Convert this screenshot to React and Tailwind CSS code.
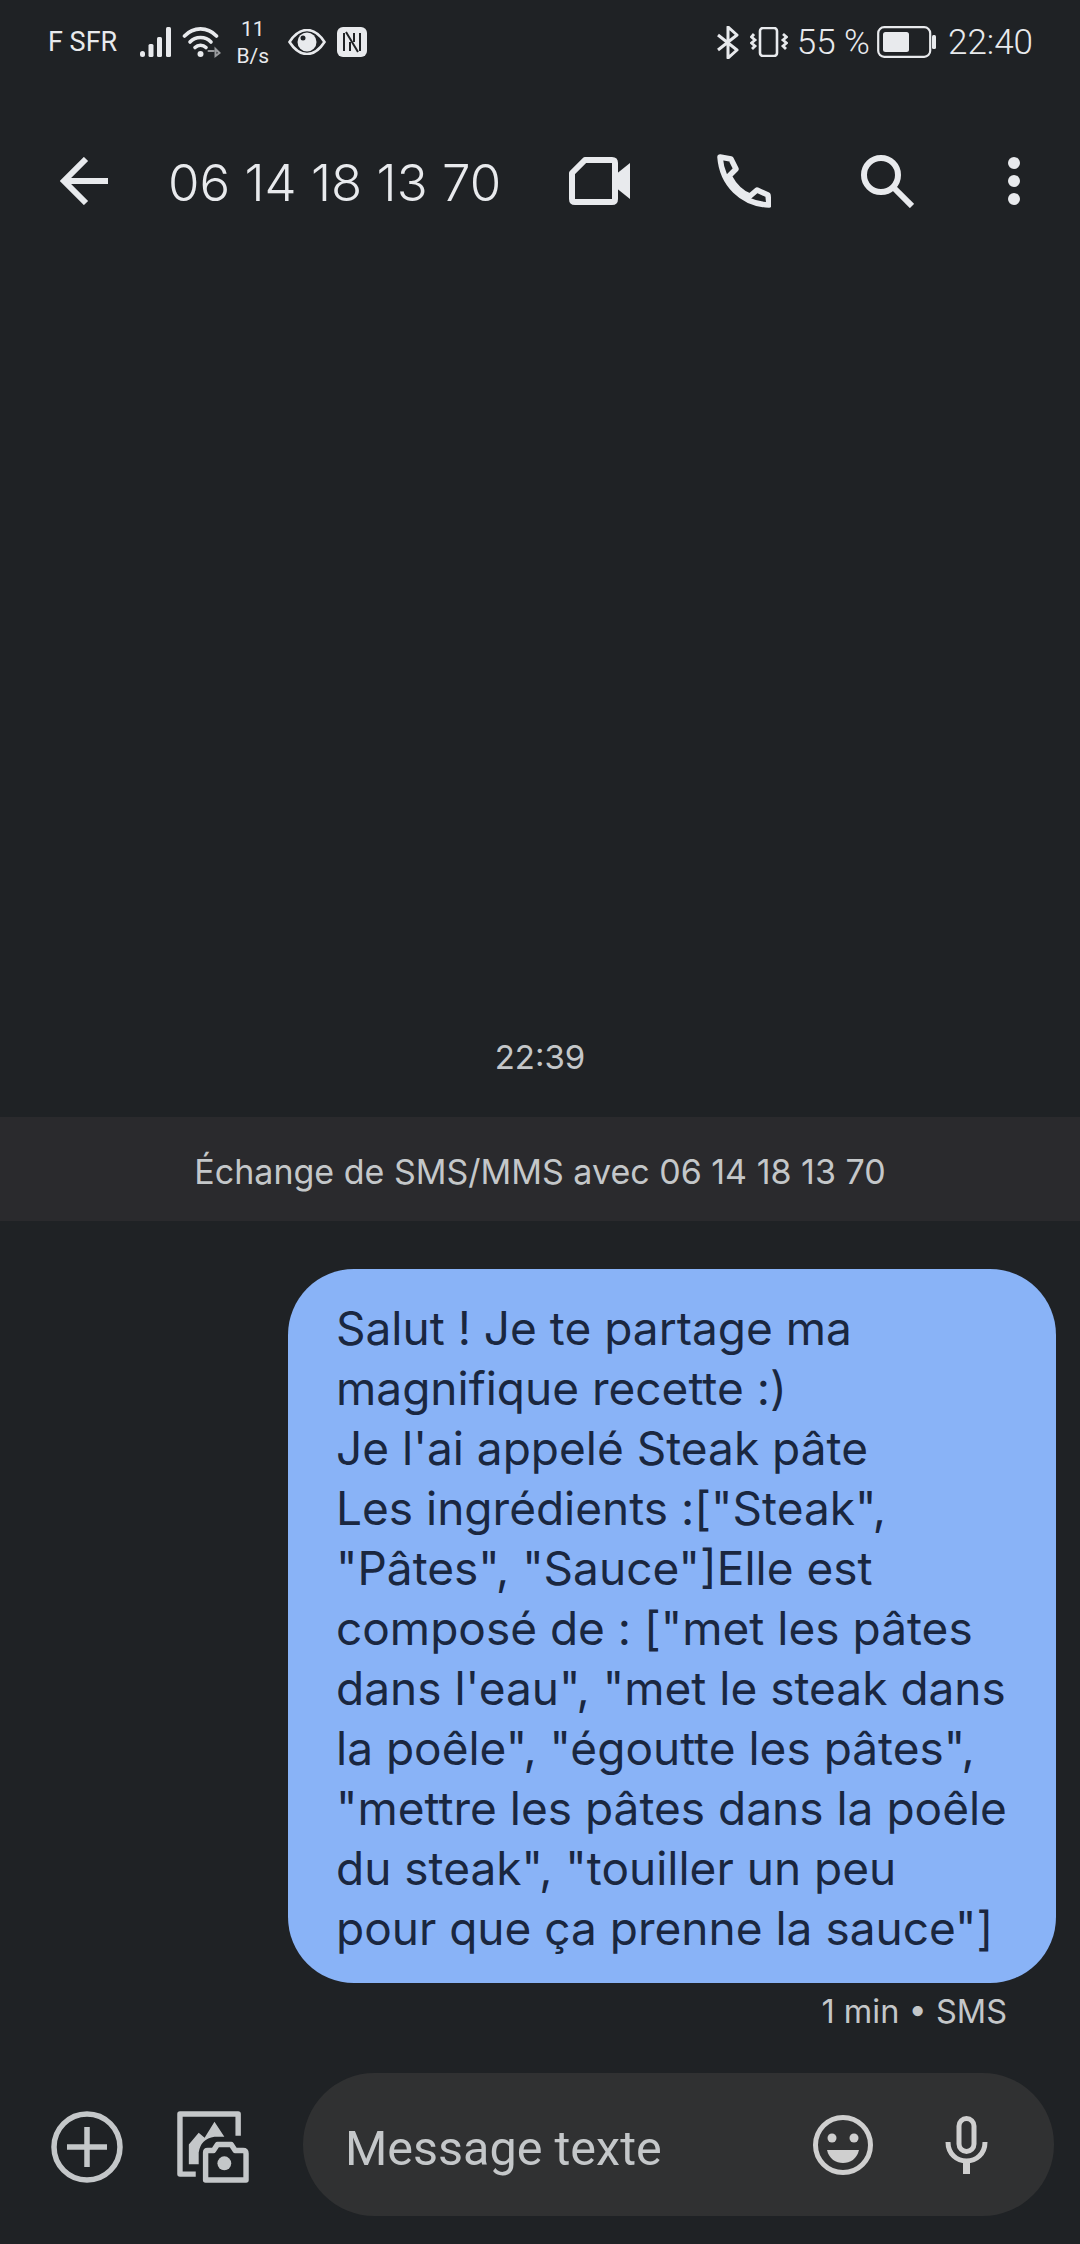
const lines = [
  "Salut ! Je te partage ma",
  "magnifique recette :)",
  "Je l'ai appelé Steak pâte",
  'Les ingrédients :["Steak",',
  '"Pâtes", "Sauce"]Elle est',
  'composé de : ["met les pâtes',
  'dans l\'eau", "met le steak dans',
  'la poêle", "égoutte les pâtes",',
  '"mettre les pâtes dans la poêle',
  'du steak", "touiller un peu',
  'pour que ça prenne la sauce"]',
];

const StatusBar = () => (
  <div className="flex h-[84px] items-center justify-between pl-[48px] pr-[47px] text-[#e8eaed]">
    <div className="flex items-center">
      <span className="text-[27px] leading-none">F SFR</span>
      <svg className="ml-[22px]" width="33" height="30" viewBox="0 0 33 30" fill="#e8eaed">
        <rect x="1" y="24" width="5" height="6" rx="2.5" />
        <rect x="9.5" y="17" width="5" height="13" rx="1.5" />
        <rect x="18" y="10" width="5" height="20" rx="1.5" />
        <rect x="27" y="0" width="5" height="30" rx="1.5" />
      </svg>
      <svg className="ml-[10px]" width="39" height="31" viewBox="0 0 38 31" fill="none" stroke="#e8eaed" strokeWidth="3.6" strokeLinecap="round">
        <path d="M2 9 C11 -0.5 25 -0.5 34 9" />
        <path d="M7.5 15 C13 9 23 9 28.5 15" />
        <path d="M12.5 20.5 C15.5 17.5 20.5 17.5 23.5 20.5" />
        <circle cx="18" cy="27" r="3" fill="#e8eaed" stroke="none" />
        <path d="M26 24 L31 24 M33 22 L37 26 L33 29 Z" stroke="#9a9c9f" strokeWidth="2" />
      </svg>
      <div className="ml-[15px] mt-[2px] flex w-[33px] flex-col items-center text-[21px] leading-[27px]">
        <span>11</span>
        <span>B/s</span>
      </div>
      <svg className="ml-[19px]" width="38" height="26" viewBox="0 0 38 26">
        <path d="M1.5 13 C8 3 14 1 19 1 C24 1 30 3 36.5 13 C30 23 24 25 19 25 C14 25 8 23 1.5 13 Z" fill="none" stroke="#e8eaed" strokeWidth="2.6" />
        <circle cx="19" cy="13" r="9.5" fill="#e8eaed" />
        <circle cx="15" cy="9" r="2.5" fill="#1f2225" />
      </svg>
      <svg className="ml-[11px]" width="30" height="30" viewBox="0 0 30 30">
        <rect x="0" y="0" width="30" height="30" rx="6" fill="#e8eaed" />
        <path d="M7 6 L7 24 M23 6 L23 24 M9 5 L21 25 M13 15 L13 24 M17 6 L17 15" stroke="#1f2225" strokeWidth="2" fill="none" />
      </svg>
    </div>
    <div className="flex items-center">
      <svg width="22" height="33" viewBox="0 0 22 33" fill="none" stroke="#e8eaed" strokeWidth="3" strokeLinejoin="round">
        <path d="M1 9 L20 24 L11 32 L11 1 L20 9 L1 24" />
      </svg>
      <svg className="ml-[11px]" width="38" height="30" viewBox="0 0 38 30" fill="none" stroke="#e8eaed">
        <rect x="10" y="1" width="17" height="28" rx="3" strokeWidth="2.6" />
        <path d="M4 7 L1.5 10 L5 13 L1.5 16 L5 19 L2 22" strokeWidth="2.8" />
        <path d="M33 7 L36.5 10 L33 13 L36.5 16 L33 19 L36 22" strokeWidth="2.8" />
      </svg>
      <span className="ml-[9px] text-[35px] font-light leading-none">55 %</span>
      <svg className="ml-[7px]" width="59" height="32" viewBox="0 0 59 32">
        <rect x="1.2" y="1.2" width="52" height="29.6" rx="6" fill="none" stroke="#e8eaed" strokeWidth="2.2" />
        <rect x="6" y="6" width="26" height="20" rx="2.5" fill="#e8eaed" />
        <rect x="55" y="9" width="4" height="14" rx="1.5" fill="#e8eaed" />
      </svg>
      <span className="ml-[12px] text-[35px] font-light leading-none">22:40</span>
    </div>
  </div>
);

const Toolbar = () => (
  <div className="flex h-[194px] items-center text-[#e8eaed]">
    <svg className="ml-[60px]" width="48" height="48" viewBox="0 0 48 48" fill="none" stroke="#e8eaed" strokeWidth="6">
      <path d="M48 24 L4 24" />
      <path d="M26 2 L4 24 L26 46" />
    </svg>
    <span className="ml-[60px] mt-[3px] w-[401px] whitespace-nowrap font-['Inter',sans-serif] text-[51px] font-light leading-none">06 14 18 13 70</span>
    <svg width="61" height="48" viewBox="0 0 61 48" fill="none">
      <path d="M16 3 L43 3 Q46 3 46 6 L46 42 Q46 45 43 45 L6 45 Q3 45 3 42 L3 16 Z" stroke="#e8eaed" strokeWidth="6" strokeLinejoin="round" />
      <path d="M46 18 L61 6 L61 42 L46 30 Z" fill="#e8eaed" />
    </svg>
    <svg className="ml-[87px]" width="54" height="54" viewBox="0 0 54 54" fill="none" stroke="#e8eaed" strokeWidth="5.5" strokeLinejoin="round">
      <path d="M3 3 L14 5 L19 15 L12 22 C18 33 24 39 33 42 L40 36 L51 41 L52 51 C25 50 5 30 3 3 Z" />
    </svg>
    <svg className="ml-[90px]" width="53" height="53" viewBox="0 0 53 53" fill="none" stroke="#e8eaed" strokeWidth="6">
      <circle cx="20" cy="20" r="17" />
      <path d="M32 32 L51 51" />
    </svg>
    <div className="ml-[94px] flex flex-col gap-[6px]">
      <div className="h-[12px] w-[12px] rounded-full bg-[#e8eaed]" />
      <div className="h-[12px] w-[12px] rounded-full bg-[#e8eaed]" />
      <div className="h-[12px] w-[12px] rounded-full bg-[#e8eaed]" />
    </div>
  </div>
);

const Composer = () => (
  <div className="flex items-center pb-[28px] pl-[51px]">
    <svg className="mt-[4px]" width="72" height="72" viewBox="0 0 72 72" fill="none" stroke="#c4c7c9" strokeWidth="5.5">
      <circle cx="36" cy="36" r="33" />
      <path d="M16 36 L56 36 M36 16 L36 56" />
    </svg>
    <svg className="ml-[54px] mt-[4px]" width="72" height="72" viewBox="0 0 73 73" fill="none">
      <path d="M19 64 L3 64 L3 3 L62 3 L62 25" stroke="#c4c7c9" strokeWidth="5.5" strokeLinejoin="round" />
      <path d="M12 54 L12 34 L22 22 L28 27 L38 11 L48 26 L38 26 Q24 28 22 42 L22 54 Z" fill="#c4c7c9" />
      <path d="M29 42 Q29 40 31 40 L37 40 L41 34 L55 34 L59 40 L67 40 Q70 40 70 43 L70 70 L29 70 Z" stroke="#c4c7c9" strokeWidth="5.5" strokeLinejoin="round" />
      <circle cx="48" cy="53" r="7" fill="#c4c7c9" />
    </svg>
    <div className="ml-[54px] flex h-[143px] w-[751px] items-center rounded-[72px] bg-[#303132] pl-[42px]">
      <span className="mt-[9px] w-[468px] text-[48.5px] leading-none text-[#c4c7c9]">Message texte</span>
      <svg className="mt-[1px]" width="60" height="60" viewBox="0 0 60 60" fill="none">
        <circle cx="30" cy="30" r="27.5" stroke="#cfcfcf" strokeWidth="5" />
        <circle cx="19" cy="23" r="4.5" fill="#cfcfcf" />
        <circle cx="41" cy="23" r="4.5" fill="#cfcfcf" />
        <path d="M14 35 L46 35 C44 44 37 48 30 48 C23 48 16 44 14 35 Z" fill="#cfcfcf" />
      </svg>
      <svg className="ml-[72px] mt-[1px]" width="43" height="58" viewBox="0 0 43 58" fill="none">
        <rect x="14" y="2.5" width="15" height="33" rx="7.5" stroke="#cfcfcf" strokeWidth="5" />
        <path d="M3 26 C3 38 12 45 21.5 45 C31 45 40 38 40 26" stroke="#cfcfcf" strokeWidth="5" />
        <path d="M21.5 44 L21.5 58" stroke="#cfcfcf" strokeWidth="7" />
      </svg>
    </div>
  </div>
);

export default function App() {
  return (
    <div className="flex h-[2244px] w-[1080px] flex-col overflow-hidden bg-[#1f2225] font-['Roboto',sans-serif]">
      <StatusBar />
      <Toolbar />
      <div className="flex flex-1 flex-col justify-end font-['Inter',sans-serif]">
        <div className="text-center text-[33px] leading-none text-[#c4c7c9]">22:39</div>
        <div className="mt-[43px] flex h-[104px] items-center justify-center bg-[#2a2a2d] pt-[5px] text-[34px] text-[#c4c7c9]">
          Échange de SMS/MMS avec 06 14 18 13 70
        </div>
        <div className="ml-[288px] mt-[48px] w-[768px] rounded-[66px] bg-[#89b3f7] pb-[25px] pl-[48px] pt-[29px] text-[46px] leading-[60px] text-[#1a2740]">
          {lines.map((line) => (
            <div key={line} className="whitespace-nowrap">
              {line}
            </div>
          ))}
        </div>
        <div className="mt-[2px] pr-[73px] text-right text-[32.5px] leading-[54px] text-[#c4c7c9]">1 min • SMS</div>
        <div className="h-[34px]" />
      </div>
      <Composer />
    </div>
  );
}
